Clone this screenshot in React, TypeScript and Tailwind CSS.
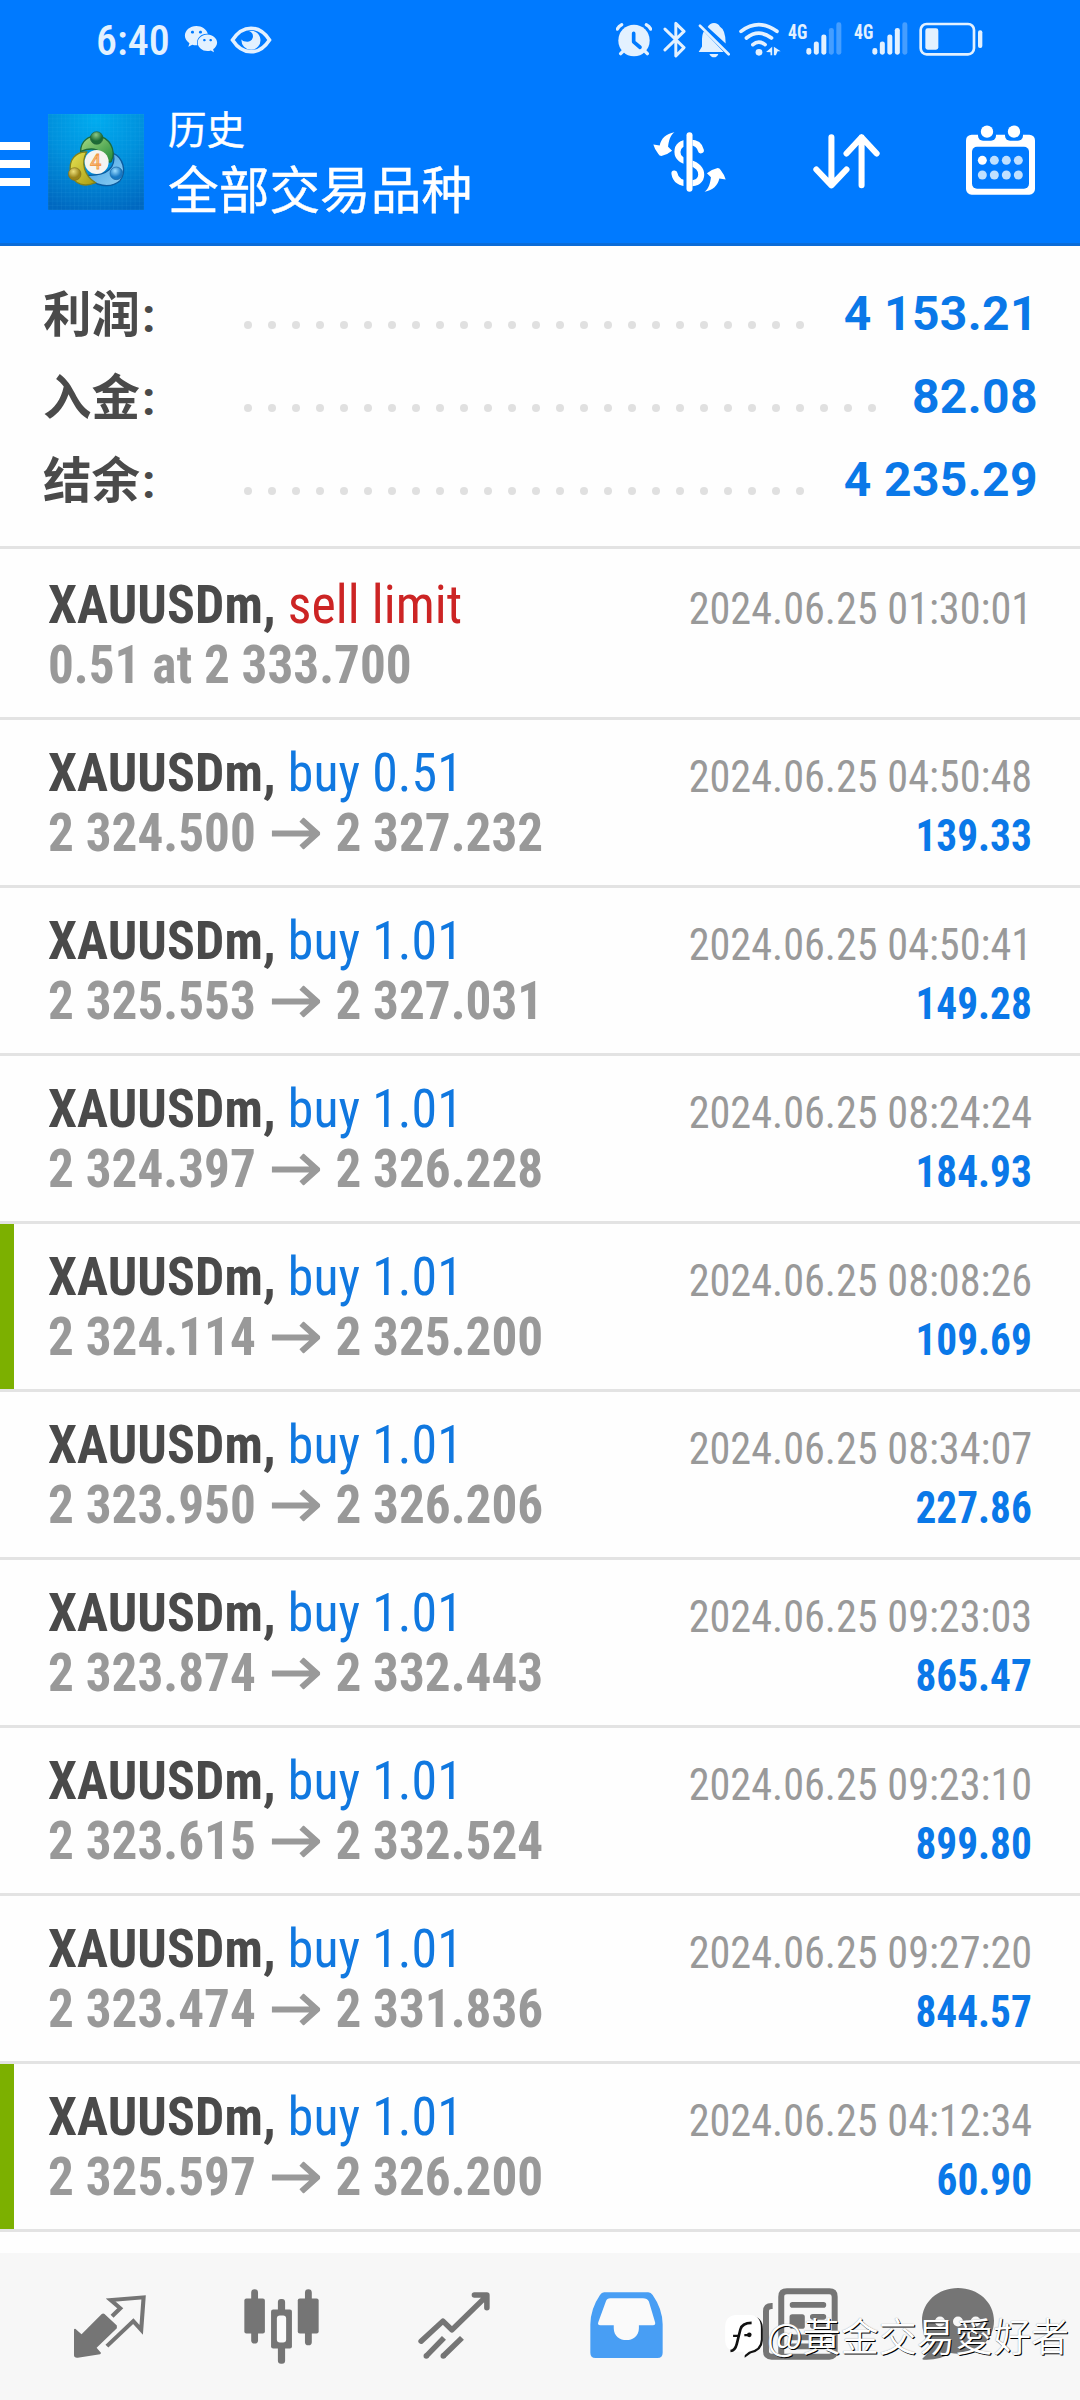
import type { ReactNode } from "react";
import { FaWeixin } from "react-icons/fa";

type Trade = {
  action: string;
  sell?: boolean;
  from: string;
  to?: string;
  time: string;
  profit?: string;
  marked?: boolean;
};

const trades: Trade[] = [
  { action: "sell limit", sell: true, from: "0.51 at 2 333.700", time: "2024.06.25 01:30:01" },
  { action: "buy 0.51", from: "2 324.500", to: "2 327.232", time: "2024.06.25 04:50:48", profit: "139.33" },
  { action: "buy 1.01", from: "2 325.553", to: "2 327.031", time: "2024.06.25 04:50:41", profit: "149.28" },
  { action: "buy 1.01", from: "2 324.397", to: "2 326.228", time: "2024.06.25 08:24:24", profit: "184.93" },
  { action: "buy 1.01", from: "2 324.114", to: "2 325.200", time: "2024.06.25 08:08:26", profit: "109.69", marked: true },
  { action: "buy 1.01", from: "2 323.950", to: "2 326.206", time: "2024.06.25 08:34:07", profit: "227.86" },
  { action: "buy 1.01", from: "2 323.874", to: "2 332.443", time: "2024.06.25 09:23:03", profit: "865.47" },
  { action: "buy 1.01", from: "2 323.615", to: "2 332.524", time: "2024.06.25 09:23:10", profit: "899.80" },
  { action: "buy 1.01", from: "2 323.474", to: "2 331.836", time: "2024.06.25 09:27:20", profit: "844.57" },
  { action: "buy 1.01", from: "2 325.597", to: "2 326.200", time: "2024.06.25 04:12:34", profit: "60.90", marked: true },
];

const summary = [
  { label: "利润", value: "4 153.21", dots: 24 },
  { label: "入金", value: "82.08", dots: 27 },
  { label: "结余", value: "4 235.29", dots: 24 },
];

function Icon({ box, className, children }: { box: string; className: string; children: ReactNode }) {
  return (
    <svg viewBox={box} preserveAspectRatio="none" className={`shrink-0 ${className}`} fill="none" aria-hidden="true">
      {children}
    </svg>
  );
}

function Signal({ level }: { level: number }) {
  const tops = [115, 95, 74, 54, 37];
  return (
    <Icon box="620 36 108 100" className="h-[33px] w-[36px]">
      {tops.map((top, i) => (
        <rect key={top} x={621 + i * 22.5} y={top} width="15" height={135 - top} rx="7" fill="#e3f1ff" opacity={i < level ? 1 : 0.3} />
      ))}
    </Icon>
  );
}

function NetworkLabel() {
  return (
    <span className="inline-block w-[19px] origin-left scale-x-[0.88] whitespace-nowrap font-['Roboto_Condensed'] text-[20px] font-bold leading-[18px]">
      4G
    </span>
  );
}

function StatusBar() {
  return (
    <div className="flex h-[80px] items-start pl-[96px] pr-[97px] pt-[21px] text-[#e3f1ff]">
      <span className="h-[40px] w-[77px] whitespace-nowrap font-['Roboto'] text-[42px] font-medium leading-[40px] [font-stretch:80%]">
        6:40
      </span>
      <FaWeixin className="ml-[11px] mt-[3px] h-[30px] w-[34px]" />
      <Icon box="0 0 42 28" className="ml-[12px] mt-[5px] h-[28px] w-[42px]">
        <path d="M2.5 14C8 5.500 14 2.200 21 2.200S34 5.500 39.500 14C34 22.500 28 25.800 21 25.800S8 22.500 2.500 14Z" stroke="#e3f1ff" strokeWidth="3.600" />
        <path d="M19 5a9.500 9.500 0 1 1-7.500 8.500a4.500 4.500 0 0 0 4.500 2a5.200 5.200 0 0 0 3-10.500Z" fill="#e3f1ff" />
      </Icon>
      <div className="ml-auto flex items-start">
        <Icon box="50 36 108 104" className="mt-[1px] h-[35px] w-[36px]">
          <circle cx="104" cy="91" r="47" fill="#e3f1ff" />
          <path d="M54 57Q58 48 67 44M154 57Q150 48 141 44M64 130l10-10M144 130l-10-10" stroke="#e3f1ff" strokeWidth="10" strokeLinecap="round" />
          <path d="M103 70v25l19 16" stroke="#007aff" strokeWidth="11" strokeLinecap="round" strokeLinejoin="round" />
        </Icon>
        <Icon box="190 33 70 110" className="ml-[11px] h-[37px] w-[23px]">
          <path d="M196 57L254 112L229 137V40L254 64L196 119" stroke="#e3f1ff" strokeWidth="9" strokeLinecap="round" strokeLinejoin="round" />
        </Icon>
        <Icon box="296 38 96 104" className="ml-[12px] mt-[2px] h-[35px] w-[32px]">
          <path d="M298 124L308 108V85Q309 68 314 63L373 124Z" fill="#e3f1ff" />
          <path d="M325 50Q332 38 344 38T362 49Q379 58 379 99Z" fill="#e3f1ff" />
          <path d="M302 46L388 131" stroke="#e3f1ff" strokeWidth="8" strokeLinecap="round" />
          <path d="M330 130h27q-4 10-13 10t-14-10Z" fill="#e3f1ff" />
        </Icon>
        <Icon box="420 34 124 102" className="ml-[9px] mt-px h-[34px] w-[42px]">
          <path d="M426 62Q478 22 532 62M442 82Q478 53 516 82M461 102Q478 87 497 102" stroke="#e3f1ff" strokeWidth="11" strokeLinecap="round" />
          <circle cx="479" cy="125" r="10" fill="#e3f1ff" />
          <path d="M500 124l18-16v26h-5v-9ZM523 108l20 14h-9l-5 12h-6Z" fill="#e3f1ff" />
        </Icon>
        <div className="ml-[7px]"><NetworkLabel /></div>
        <div className="-ml-px mt-px"><Signal level={3} /></div>
        <div className="ml-[12px]"><NetworkLabel /></div>
        <div className="-ml-px mt-px"><Signal level={4} /></div>
        <Icon box="959 37 192 102" className="ml-[11px] mt-px h-[34px] w-[64px]">
          <rect x="964" y="43" width="160" height="91" rx="18" stroke="#e3f1ff" strokeWidth="8" />
          <rect x="978" y="56" width="39" height="64" rx="7" fill="#e3f1ff" />
          <rect x="1136" y="62" width="13" height="53" rx="6" fill="#e3f1ff" />
        </Icon>
      </div>
    </div>
  );
}

function Logo() {
  return (
    <svg viewBox="0 0 288 288" className="size-24 shrink-0" aria-hidden="true">
      <defs>
        <radialGradient id="sky" cx="0.5" cy="0.05" r="1">
          <stop offset="0" stopColor="#00acf0" />
          <stop offset="0.5" stopColor="#0090dc" />
          <stop offset="1" stopColor="#0068c0" />
        </radialGradient>
        <pattern id="grid" width="13" height="13" patternUnits="userSpaceOnUse">
          <path d="M0 0H13M0 0V13" stroke="#4cc0f4" strokeOpacity="0.2" strokeWidth="2" />
        </pattern>
        <linearGradient id="green" x2="1" y2="1"><stop stopColor="#a9dc86" /><stop offset="1" stopColor="#218a38" /></linearGradient>
        <linearGradient id="yellow" x2="1" y2="1"><stop stopColor="#e8e455" /><stop offset="1" stopColor="#a79a10" /></linearGradient>
        <linearGradient id="blue" x2="1" y2="1"><stop stopColor="#3b9be0" /><stop offset="1" stopColor="#8fd0f4" /></linearGradient>
        <radialGradient id="greenBall" cx="0.45" cy="0.25"><stop stopColor="#8cc887" /><stop offset="1" stopColor="#1c6b35" /></radialGradient>
        <radialGradient id="yellowBall" cx="0.4" cy="0.3"><stop stopColor="#eee07a" /><stop offset="1" stopColor="#9a8418" /></radialGradient>
        <radialGradient id="blueBall" cx="0.4" cy="0.3"><stop stopColor="#9bdcff" /><stop offset="1" stopColor="#1879c4" /></radialGradient>
      </defs>
      <rect width="288" height="288" fill="url(#sky)" />
      <rect width="288" height="288" fill="url(#grid)" />
      <path d="M118 184C134 218 190 224 216 200C238 172 224 130 196 118C204 160 180 186 118 184Z" fill="url(#blue)" stroke="#0b5ca0" strokeWidth="4" />
      <path d="M68 176C60 138 84 112 116 114C98 146 108 184 142 206C112 220 78 214 68 176Z" fill="url(#yellow)" stroke="#80811c" strokeWidth="4" />
      <path d="M98 112C98 78 124 66 146 66C184 68 206 108 190 142C176 152 174 126 160 116C140 100 120 104 98 112Z" fill="url(#green)" stroke="#1d6c3c" strokeWidth="4" />
      <circle cx="146" cy="72" r="19" fill="url(#greenBall)" stroke="#23623a" strokeWidth="2" />
      <circle cx="80" cy="180" r="19" fill="url(#yellowBall)" stroke="#80701c" strokeWidth="2" />
      <circle cx="205" cy="178" r="19" fill="url(#blueBall)" stroke="#1764a4" strokeWidth="2" />
      <circle cx="146" cy="144" r="36" fill="#f4f4f2" />
      <text x="143" y="165" textAnchor="middle" fontSize="60" fontFamily="Roboto, sans-serif" fill="#ffc98c" stroke="#f09a4c" strokeWidth="2.500">4</text>
    </svg>
  );
}

function Header() {
  return (
    <header className="flex h-[246px] flex-col border-b-[3px] border-[#0b6cd8] bg-[#007aff]">
      <StatusBar />
      <div className="flex items-start">
        <div className="mt-[62px] flex w-[30px] flex-col gap-[10px]">
          <div className="h-2 bg-white" />
          <div className="h-2 bg-white" />
          <div className="h-2 bg-white" />
        </div>
        <div className="ml-[18px] mt-[34px]"><Logo /></div>
        <div className="ml-6 mt-[20px] w-[320px] whitespace-nowrap font-['Noto_Sans_CJK_SC',sans-serif] text-white [-webkit-text-stroke:0.4px_#fff]">
          <div className="text-[38.500px] leading-[54px]">历史</div>
          <div className="text-[50.700px] leading-[66px]">全部交易品种</div>
        </div>
        <Icon box="41 65 218 182" className="ml-[165px] mt-[52px] h-[60px] w-[73px]">
          <path d="M184 121C180 103 168 97 152 97C125 97 114 108 114 126C114 146 130 151 150 158C175 166 185 176 185 195C185 212 172 221 150 221C125 221 108 212 105 191" stroke="#fff" strokeWidth="18" strokeLinecap="round" />
          <rect x="132" y="66" width="27" height="180" fill="#007aff" />
          <rect x="141" y="66" width="18" height="180" rx="9" fill="#fff" />
          <path id="swap" d="M105 66C92 76 88 92 86 110L98 122Q84 134 66 138Q60 138 57 132Q46 118 42 103L61 106C65 85 80 70 105 66Z" fill="#fff" />
          <use href="#swap" transform="rotate(180 150 156)" />
        </Icon>
        <Icon box="518 73 200 166" className="ml-[87px] mt-[54px] h-[55px] w-[67px]">
          <path d="M573 83V228M528 180L573 228L618 180M663 228V83M618 132L663 83L708 132" stroke="#fff" strokeWidth="18" strokeLinecap="round" strokeLinejoin="round" />
        </Icon>
        <Icon box="978 46 207 210" className="ml-[86px] mt-[45px] h-[70px] w-[69px]">
          <rect x="978" y="75" width="207" height="180" rx="17" fill="#fff" />
          <rect x="1014" y="60" width="54" height="33" rx="15" fill="#007aff" />
          <rect x="1095" y="60" width="54" height="33" rx="15" fill="#007aff" />
          <circle cx="1041" cy="66" r="18.500" fill="#fff" />
          <circle cx="1122" cy="66" r="18.500" fill="#fff" />
          <rect x="996" y="111" width="171" height="126" rx="15" fill="#007aff" />
          {[152, 196].map((y) =>
            [1027, 1063, 1099, 1135].map((x) => (
              <circle key={`${x}-${y}`} cx={x} cy={y} r="13.500" fill={x === 1027 && y === 152 ? "#fff" : "#c0e0ff"} />
            )),
          )}
        </Icon>
      </div>
    </header>
  );
}

function Summary() {
  return (
    <section className="h-[303px] border-b-[3px] border-[#e3e3e3] pl-[43px] pr-[42px] pt-[26px]">
      {summary.map((row) => (
        <div key={row.label} className="flex h-[83px] items-center font-['Roboto'] text-[48px] font-bold leading-[83px]">
          <span className="mt-[4px] w-[201px] whitespace-nowrap font-['Roboto','Noto_Sans_CJK_SC',sans-serif] text-[#4a4a4a]">
            <span className="text-[48.500px]">{row.label}</span>
            <span className="ml-[2px]">:</span>
          </span>
          <span className="mt-[22px] flex gap-4">
            {Array.from({ length: row.dots }, (_, i) => (
              <span key={i} className="size-2 rounded-full bg-[#e0e0e0]" />
            ))}
          </span>
          <span className="ml-auto whitespace-nowrap tracking-[0.400px] text-[#0a78e8]">{row.value}</span>
        </div>
      ))}
    </section>
  );
}

function TradeRow({ trade }: { trade: Trade }) {
  return (
    <div className="relative h-[168px] border-b-[3px] border-[#e3e3e3] pl-[48px] pr-[48px] pt-[23px] font-['Roboto_Condensed'] text-[54px] leading-[60px]">
      {trade.marked && <div className="absolute left-0 top-0 h-full w-[14px] bg-[#7cb000]" />}
      <div className="flex h-[60px] items-baseline justify-between whitespace-nowrap">
        <div className="origin-left scale-x-[0.96] tracking-[0.080px]">
          <span className="font-bold text-[#4a4a4a]">XAUUSDm, </span>
          <span className={trade.sell ? "text-[#cc2424]" : "text-[#1078e0]"}>{trade.action}</span>
        </div>
        <span className="origin-right translate-y-px scale-x-[0.938] text-[45px] text-[#999999]">{trade.time}</span>
      </div>
      <div className="flex h-[60px] items-baseline justify-between whitespace-nowrap font-bold">
        <div className="flex origin-left translate-y-[-0.500px] scale-x-[0.948] items-baseline text-[#999999]">
          <span>{trade.from}</span>
          {trade.to && (
            <>
              <svg viewBox="0 0 48 32" preserveAspectRatio="none" className="ml-[17px] mr-[16px] h-8 w-[51px] translate-y-[-1px]" fill="none" aria-label="→">
                <path d="M0 16H44M29.500 2L45 16L29.500 30" stroke="#999999" strokeWidth="6" />
              </svg>
              <span>{trade.to}</span>
            </>
          )}
        </div>
        {trade.profit && <span className="origin-right scale-x-[0.918] text-[45px] text-[#0a78e8]">{trade.profit}</span>}
      </div>
    </div>
  );
}

function TabBar() {
  return (
    <nav className="relative flex h-[147px] items-start bg-[#f7f7f7] pl-[74px] pt-[35px]">
      <Icon box="215 284 210 190" className="mt-[7px] h-[63px] w-[72px]">
        <path d="M215 387Q219 384 222 389L237 402L296 341Q300 338 304 341L340 376V384L281 443L294 459L291 463L226 473Q215 474 215 466Z" fill="#757575" />
        <path d="M326 348L350 324L322 299L418 291L411 389L388 363L311 438" stroke="#757575" strokeWidth="12" />
      </Icon>
      <Icon box="708 266 219 224" className="ml-[98px] mt-[1px] h-[75px] w-[75px]">
        <g fill="#757575">
          <rect x="729" y="267" width="20" height="162" rx="10" />
          <rect x="709" y="294" width="60" height="105" rx="6" />
          <rect x="886" y="267" width="20" height="167" rx="10" />
          <rect x="865" y="294" width="61" height="105" rx="6" />
          <rect x="807" y="296" width="21" height="193" rx="9" />
          <rect x="787" y="327" width="61" height="117" rx="6" />
        </g>
        <rect x="804" y="345" width="27" height="81" rx="9" fill="#fafafa" />
      </Icon>
      <Icon box="1213 275 208 200" className="ml-[99px] mt-[4px] h-[67px] w-[72px]">
        <path d="M1222 422L1285 362L1311 388L1408 290M1376 284H1412V322" stroke="#757575" strokeWidth="16" strokeLinecap="round" strokeLinejoin="round" />
        <path d="M1237 466L1288 412M1286 466L1340 412" stroke="#757575" strokeWidth="16" />
        <circle cx="1237" cy="466" r="8" fill="#757575" />
        <circle cx="1286" cy="466" r="8" fill="#757575" />
      </Icon>
      <Icon box="145 275 212 199" className="ml-[100px] mt-[4px] h-[66px] w-[73px]">
        <path d="M186 276H314Q322 276 327 284Q355 325 356 372V458Q356 474 341 474H161Q146 474 146 458V372Q147 325 174 284Q179 276 186 276Z" fill="#489ef4" />
        <path d="M204 294H299Q311 294 316 304L334 366Q336 375 328 375H287V384C287 432 214 432 214 384V375H175Q166 375 169 366L191 304Q194 294 204 294Z" fill="#fafafa" />
      </Icon>
      <Icon box="158 56 226 217" className="ml-[100px] mt-0 h-[72px] w-[75px]">
        <path d="M187 110H184Q167 110 167 126V247Q167 263 184 263H358Q374 263 374 247V82Q374 66 358 66H230Q213 66 213 82V263" stroke="#757575" strokeWidth="18" />
        <path d="M247 107H340M308 143H340M308 170H340M247 205H340M247 232H340" stroke="#757575" strokeWidth="17" strokeLinecap="round" />
        <rect x="238" y="135" width="46" height="44" rx="8" fill="#757575" />
      </Icon>
      <Icon box="636 56 216 217" className="ml-[84px] mt-0 h-[72px] w-[72px]">
        <path d="M744 56C804 56 852 98 852 155C852 212 804 254 744 254Q732 254 722 252Q690 274 642 272Q634 271 639 267Q657 252 662 234Q636 202 636 155C636 98 684 56 744 56Z" fill="#757575" />
        <circle cx="690" cy="157" r="15" fill="#f7f7f7" />
        <circle cx="744" cy="157" r="15" fill="#f7f7f7" />
        <circle cx="797" cy="157" r="15" fill="#f7f7f7" />
      </Icon>
      <div className="absolute left-[725px] top-[58px] flex items-center">
        <svg viewBox="0 0 114 130" className="mt-[3px] h-[43px] w-[38px]" aria-hidden="true">
          <path d="M80 4Q114 6 114 42V78Q113 108 78 116L59 129V113Z" fill="#111" />
          <path d="M34 0H76Q108 2 108 38V74Q107 104 72 111L56 124V111H34Q0 108 0 78V36Q0 2 34 0Z" fill="#fff" />
          <path d="M16 109Q30 108 35 88L46 44Q51 24 80 24" stroke="#111" strokeWidth="8" fill="none" />
          <path d="M24 63H42M58 61H76" stroke="#111" strokeWidth="7" fill="none" />
          <circle cx="73" cy="60" r="7" fill="#111" />
        </svg>
        <span className="ml-[4px] whitespace-nowrap font-['Noto_Sans_CJK_TC',sans-serif] text-[38.100px] leading-[48px] text-white [font-weight:350] [text-shadow:1px_1px_0_#000,0_0_1px_#888]">
          @黃金交易愛好者
        </span>
      </div>
    </nav>
  );
}

export default function App() {
  return (
    <div className="h-[2400px] w-[1080px] overflow-hidden bg-[#fefefe]">
      <Header />
      <Summary />
      <main className="h-[1704px] pt-[3px]">
        {trades.map((trade) => (
          <TradeRow key={trade.time} trade={trade} />
        ))}
      </main>
      <TabBar />
    </div>
  );
}
